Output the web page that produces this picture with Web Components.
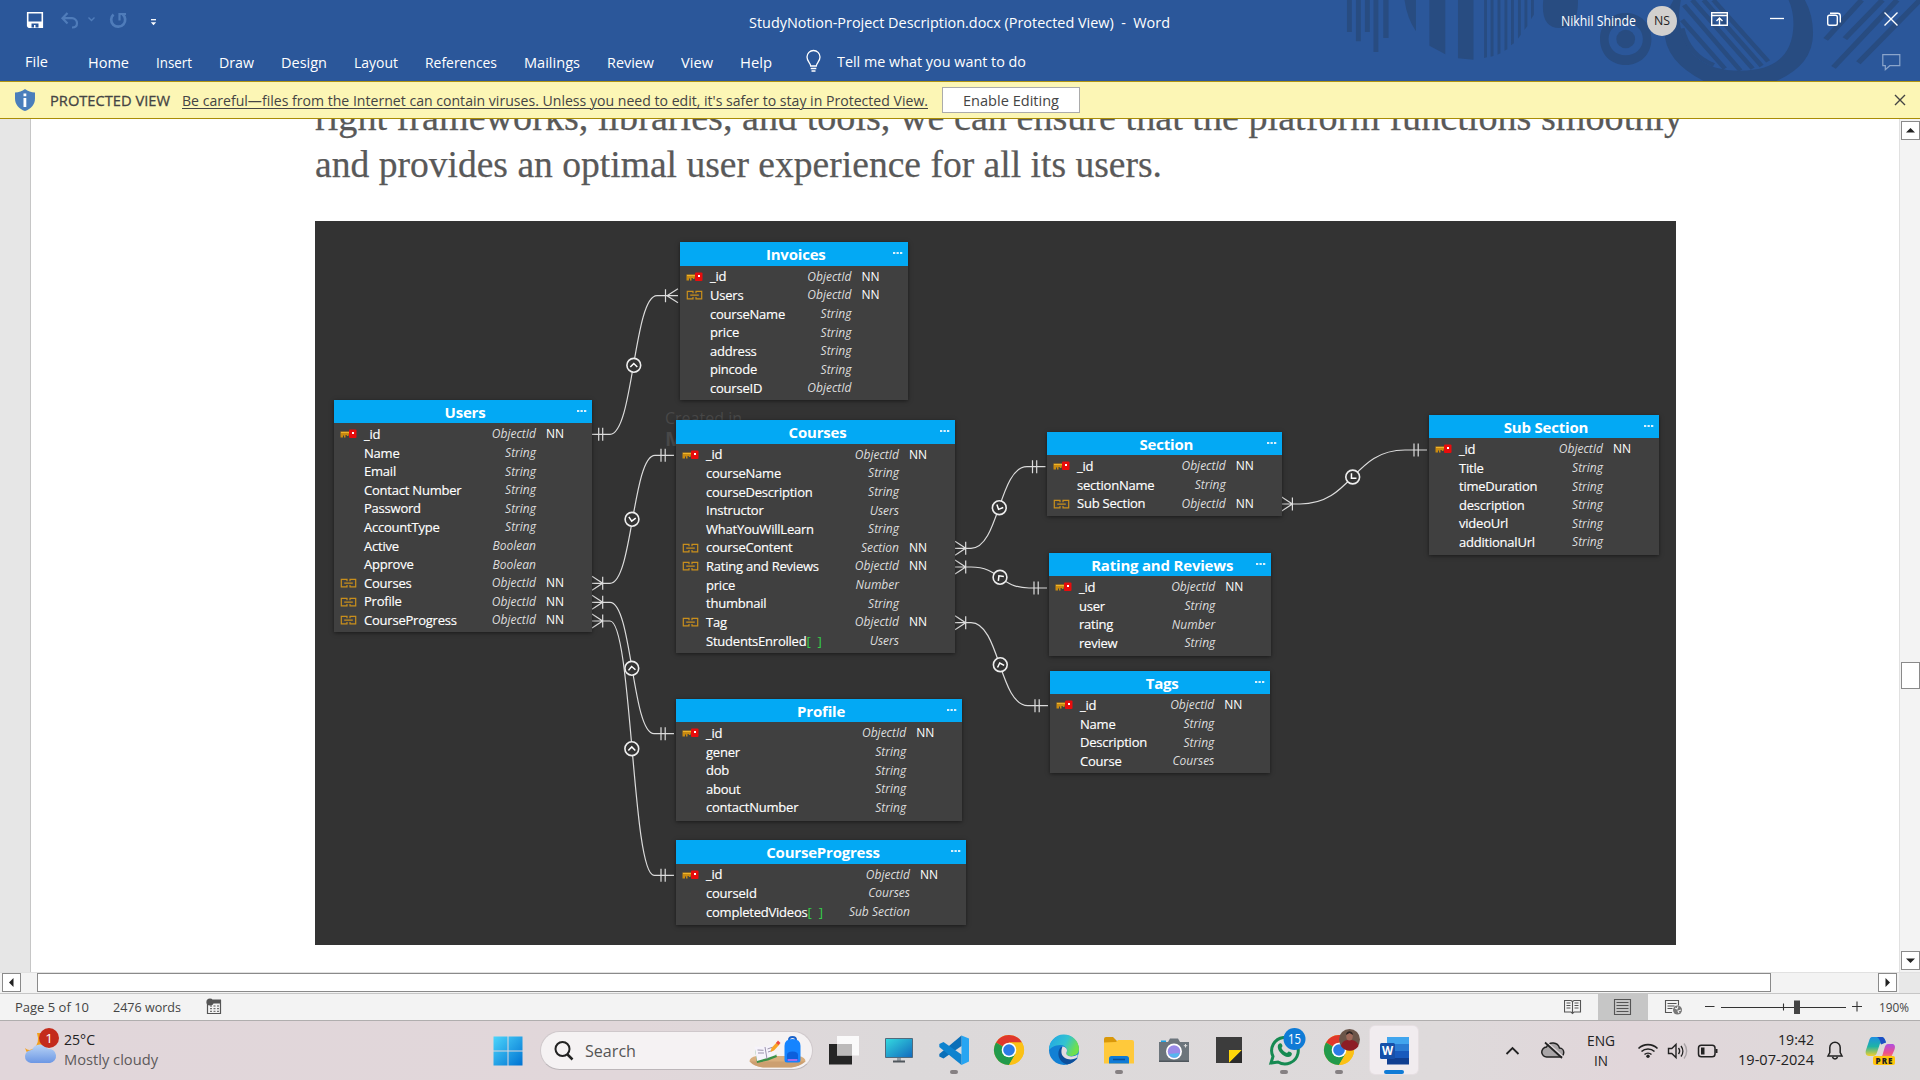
<!DOCTYPE html>
<html lang="en">
<head>
<meta charset="utf-8">
<title>StudyNotion-Project Description.docx - Word</title>
<style>
html,body{margin:0;padding:0;width:1920px;height:1080px;overflow:hidden;background:#fff}
body{font-family:"Open Sans","Noto Sans",sans-serif}
</style>
</head>
<body>
<word-window></word-window>
<script>
const make = (name, html, after) => customElements.define(name, class extends HTMLElement {
  constructor() {
    super();
    const t = document.createElement('template');
    t.innerHTML = html;
    this.attachShadow({mode: 'open'}).append(t.content.cloneNode(true));
  }
  connectedCallback() { if (after) after(this, this.shadowRoot); }
});

/* ---------- title bar ---------- */
make('title-bar', `<style>
:host{display:flex;height:42px;align-items:flex-start;color:#fff;font-size:15px;line-height:20px}
svg{display:block;flex:none}
.quick{display:flex;width:749px;height:42px}
.name{margin-top:12px;width:812px}
.user{margin-top:11px;font-size:14px;width:86px}
.av{width:30px;height:30px;margin-top:6px;border-radius:50%;background:#d2d0ce;color:#222;font-size:12.5px;line-height:30px;display:flex;justify-content:center;flex:none}
</style>
<div class="quick">
<svg width="170" height="42" fill="none">
<path d="M27.7 12.7h14.6v14.6H29.2l-1.5-1.5z" stroke="#fff" stroke-width="1.6"/><path d="M27.7 21.5h14.6v6H27.7z" fill="#fff"/><path d="M31.5 23.5h7v4h-3v-2.500h-1.500v2.500h-2.500z" fill="#2b579a"/>
<g stroke="#4f7cba" stroke-width="2.2"><path d="M67.500 13l-5 5.200 5 5.200M63 18.200h8.500a5 5 0 0 1 5.500 5c0 2.500-1.500 4.300-5 4.300"/><path d="M88.500 17.500l3 3 3-3" stroke-width="1.400"/><path d="M113.500 14.500a7 7 0 1 0 9 -.3" stroke-width="2.700"/><path d="M119.500 20.500v-6.500h6.500" stroke-width="2.200"/></g>
<path d="M151 19.700h5" stroke="#fff" stroke-width="1.300"/><path d="M150.800 22.300h5.400l-2.700 3z" fill="#fff"/>
</svg></div>
<div class="name"><fit-text w="421">StudyNotion-Project Description.docx (Protected View)  -  Word</fit-text></div>
<div class="user"><fit-text w="75">Nikhil Shinde</fit-text></div>
<div class="av"><fit-text w="16">NS</fit-text></div>
<svg width="243" height="42" fill="none" stroke="#fff" stroke-width="1.400"><g transform="translate(-1677 0)">
<path d="M1711.700 12.700h15.600v12.600h-15.600zM1711.700 15.500h15.600M1719.500 24.500v-6M1716.500 21l3-3 3 3"/>
<path d="M1770 18.500h14" stroke-width="1.300"/>
<rect x="1827.700" y="15.200" width="9.600" height="10" rx="1.800"/><path d="M1830 13.200h7.500a2.800 2.800 0 0 1 2.800 2.800v6.500"/>
<path d="M1884.500 12.500l13 13M1897.500 12.500l-13 13"/></g></svg>`);

/* ---------- ribbon tab row ---------- */
make('ribbon-tabs', `<style>
:host{display:flex;height:39px;color:#fff;font-size:15px;line-height:20px;align-items:flex-start}
.f{margin:9px 0 0 25px;width:63px}
nav{display:flex;gap:27px;margin-top:10px;width:718px}
.t{margin:9px 0 0 16px;width:1045px}
svg{display:block;flex:none}
</style>
<div class="f"><fit-text w="23">File</fit-text></div>
<nav><fit-text w="41">Home</fit-text><fit-text w="36">Insert</fit-text><fit-text w="35">Draw</fit-text><fit-text w="46">Design</fit-text><fit-text w="44">Layout</fit-text><fit-text w="72">References</fit-text><fit-text w="56">Mailings</fit-text><fit-text w="47">Review</fit-text><fit-text w="32">View</fit-text><fit-text w="32">Help</fit-text></nav>
<svg width="15" height="39" fill="none" stroke="#fff" stroke-width="1.300"><path d="M4.700 24c0-3-3.700-4.300-3.700-9a6.500 6.500 0 0 1 13 0c0 4.700-3.700 6-3.700 9zM4.700 26.500h5.600M5.500 29h4"/></svg>
<div class="t"><fit-text w="189">Tell me what you want to do</fit-text></div>
<svg width="20" height="39" fill="none" stroke="#8ba5cb" stroke-width="1.200"><path d="M.8 12.700h17v11h-10l-4.500 4v-4H.8z"/></svg>`);

make('app-header', `<style>
:host{display:block;position:relative;height:81px;background:#2b579a}
.art{position:absolute;left:1280px;top:0;z-index:0}
.c{position:relative;z-index:1}
</style>
<svg class="art" width="640" height="81" viewBox="0 0 1568 243" preserveAspectRatio="none">
<g fill="#284c81"><path d="M164 0h12v96h-12zM186 0h12v124h-12zM208 0h12v96h-12zM229 0h12v156h-12zM253 0h13v114h-13zM305 0h28v94q-22-40-28-94zM366 0h39v163l-39-26zM436 0h38v179l-38-4zM500 0h7v172l-7 2zM516 0h7v168l-7 2zM533 0h7v160l-7 4zM550 0h7v148l-7 4zM566 0h7v130l-7 6zM583 0h7v104l-7 12zM599 0h7v78l-7 12zM615 0h7v44l-7 14zM645 0h85q2 84-45 84t-40-84z"/>
<path fill-rule="evenodd" d="M847 39c36 0 63 32 63 78s-27 78-63 78-63-32-63-78 27-78 63-78zm0 30c-24 0-42 20-42 48s18 49 42 49 42-21 42-49-18-48-42-48z"/><ellipse cx="847" cy="117" rx="23" ry="28"/>
<path fill-rule="evenodd" d="M964 0h322q20 45 20 100 0 96-90 143h-178q-96-60-96-150 0-50 22-93zm18 0q-4 30-4 50 10 162 150 162 128 0 130-140 0-40-12-72z"/></g>
<path d="M985 85q16 80 78 110M985 60L1090 206M990 15L1128 212M1010 0L1158 206M1038 0L1180 198M1062 0L1196 184" fill="none" stroke="#284c81" stroke-width="12"/>
<path d="M1337 118L1425 0M1384 116L1476 0M1356 202L1512 0M1417 188L1568 0" stroke="#284c81" stroke-width="14"/>
</svg>
<div class="c"><title-bar></title-bar><ribbon-tabs></ribbon-tabs></div>`);

/* ---------- protected view bar ---------- */
make('protected-bar', `<style>
:host{display:flex;box-sizing:border-box;height:38px;border-top:1px solid #b09512;border-bottom:1px solid #a98d05;background:#fcf6b5;color:#444;font-size:15px;line-height:20px;align-items:flex-start}
svg{display:block;flex:none}
.a{margin-top:8px;width:132px;-webkit-text-stroke:.3px #444}
.b{margin-top:8px;width:760px}
.u{text-decoration:underline;text-underline-offset:2px;text-decoration-thickness:1px}
button{all:unset;box-sizing:border-box;margin-top:5px;width:138px;height:26px;background:#fff;border:1px solid #ababab;display:flex;justify-content:center;line-height:24px}
.x{margin-left:auto;margin-right:13px}
</style>
<svg width="50" height="36"><path d="M15 10.500c4-.3 7-1.300 10-3.500 3 2.200 6 3.200 10 3.500v6c0 6-4 10.500-10 12.500-6-2-10-6.500-10-12.500z" fill="#4a7ebb"/><path d="M23.500 16h2.800v9h-2.800zM23.500 11.500h2.800v2.800h-2.800z" fill="#fff"/></svg>
<div class="a"><fit-text w="120">PROTECTED VIEW</fit-text></div>
<div class="b"><fit-text class="u" w="746">Be careful—files from the Internet can contain viruses. Unless you need to edit, it's safer to stay in Protected View.</fit-text></div>
<button><fit-text w="96">Enable Editing</fit-text></button>
<svg class="x" width="14" height="36" stroke="#444" stroke-width="1.400"><path d="M2 13l10 10M12 13L2 23"/></svg>`);

/* ---------- one entity of the diagram ---------- */
const KEY = '<svg width="17" height="12"><path d="M.5 3.500h9.500v3H8.500V8H6.800V7H5.500v2.500H4v-2H3v2H.5z" fill="#c98a10"/><path d="M1 4.500h9" stroke="#f0b429"/><rect x="9" y="1.500" width="7.500" height="8.500" rx="1" fill="#e80c0c"/><rect x="12" y="4" width="2" height="2" fill="#fff"/></svg>';
const LINK = '<svg width="17" height="12" fill="none" stroke="#c98f1c" stroke-width="1.200"><path d="M7 4.300V2.400H1.300v7.400H7V7.900M10 4.300V2.400h5.700v7.400H10V7.900M4.200 6.100h8.600"/></svg>';
make('er-entity', `<style>
:host{display:block;position:absolute;background:#404040;box-shadow:0 1px 4px rgba(0,0,0,.5);font-family:"Open Sans",sans-serif;color:#fff}
header{height:23.5px;background:#03a9f4;display:flex;align-items:center;justify-content:center;font-weight:700;font-size:15px;letter-spacing:-.2px;line-height:20px;position:relative;box-sizing:border-box;padding:1px 0 0 4px}
header svg{position:absolute;right:5px;top:10px}
.rows{padding-top:2px}
.r{display:flex;height:18.62px;align-items:center;font-size:13px;line-height:18px;white-space:pre}
.i{width:24px;padding-left:6px;height:12px;flex:none}
.i svg{display:block}
.n{flex:1;letter-spacing:-.22px;-webkit-text-stroke:.15px #fff;position:relative;top:-.4px}.n b{font-weight:400;color:#35d04a;word-spacing:4px;-webkit-text-stroke:0}
.t{font-style:italic;font-size:12px;color:#ddd}
.q{width:46px;padding-left:10px;font-size:12px;flex:none}
</style><header><span></span><svg width="10" height="3" fill="#d8f1fd"><path d="M0 0h2.300v2H0zM3.500 0h2.300v2H3.500zM7 0h2.300v2H7z"/></svg></header><div class="rows"></div>`,
(el, sr) => {
  const f = ENTITIES[el.getAttribute('name')];
  const [x, y, r, b] = f.box;
  el.style.cssText = `left:${x - 315}px;top:${y - 221}px;width:${r - x}px;height:${b - y}px`;
  sr.querySelector('span').textContent = el.getAttribute('name');
  sr.querySelector('.rows').innerHTML = f.rows.split(';').map(s => {
    const [k, n, t] = s.split('|');
    return `<div class="r"><span class="i">${k === 'k' ? KEY : k === 'l' ? LINK : ''}</span><span class="n">${n.replace('[ ]', '<b>[ ]</b>')}</span><span class="t">${t}</span><span class="q">${k ? 'NN' : ''}</span></div>`;
  }).join('');
});

const ENTITIES = {
  'Invoices': {box: [680, 242, 907.5, 400], rows: 'k|_id|ObjectId;l|Users|ObjectId;|courseName|String;|price|String;|address|String;|pincode|String;|courseID|ObjectId'},
  'Users': {box: [334, 399.500, 592, 632], rows: 'k|_id|ObjectId;|Name|String;|Email|String;|Contact Number|String;|Password|String;|AccountType|String;|Active|Boolean;|Approve|Boolean;l|Courses|ObjectId;l|Profile|ObjectId;l|CourseProgress|ObjectId'},
  'Courses': {box: [676, 420, 955, 653], rows: 'k|_id|ObjectId;|courseName|String;|courseDescription|String;|Instructor|Users;|WhatYouWillLearn|String;l|courseContent|Section;l|Rating and Reviews|ObjectId;|price|Number;|thumbnail|String;l|Tag|ObjectId;|StudentsEnrolled[ ]|Users'},
  'Section': {box: [1047, 431.500, 1281.700, 515.500], rows: 'k|_id|ObjectId;|sectionName|String;l|Sub Section|ObjectId'},
  'Sub Section': {box: [1429, 414.500, 1659, 554.500], rows: 'k|_id|ObjectId;|Title|String;|timeDuration|String;|description|String;|videoUrl|String;|additionalUrl|String'},
  'Rating and Reviews': {box: [1049, 552.700, 1271.300, 656], rows: 'k|_id|ObjectId;|user|String;|rating|Number;|review|String'},
  'Tags': {box: [1050, 670.500, 1270.300, 773], rows: 'k|_id|ObjectId;|Name|String;|Description|String;|Course|Courses'},
  'Profile': {box: [676, 698.500, 962.200, 820.500], rows: 'k|_id|ObjectId;|gener|String;|dob|String;|about|String;|contactNumber|String'},
  'CourseProgress': {box: [676, 840, 966, 924.500], rows: 'k|_id|ObjectId;|courseId|Courses;|completedVideos[ ]|Sub Section'}
};

/* connector lines: "many" end fork, "one" end double bar, direction marker in the middle */
make('er-links', `<style>:host{display:block;position:absolute;inset:0}svg{display:block}</style><svg width="1361" height="724" viewBox="315 221 1361 724" fill="none" stroke="#dcdcdc" stroke-width="1.200"></svg>`,
(el, sr) => {
  const L = [
    {m: [592, 583.300], o: [674, 455.300], c: [610, 655], k: [632, 519.300], a: 10},
    {m: [592, 602.300], o: [674, 733.700], c: [610, 654], k: [631.800, 668.300], a: 175},
    {m: [592, 621], o: [674, 875.300], c: [610, 654], k: [631.800, 748.700], a: 180},
    {m: [955, 548.300], o: [1045.500, 466.700], c: [971, 1027], k: [999.300, 507.700], a: 25},
    {m: [955, 567], o: [1047, 588], c: [971, 1029], k: [1000, 577.300], a: 142},
    {m: [955, 622.700], o: [1048, 705.700], c: [971, 1028], k: [1000.300, 664.700], a: 162},
    {m: [1281.700, 504], o: [1427, 450], c: [1300, 1405], k: [1352.700, 477], a: 45}
  ];
  const dot = ([x, y], a) => `<circle cx="${x}" cy="${y}" r="6.900" fill="#333" stroke="#eee" stroke-width="1.600"/><path transform="translate(${x} ${y}) rotate(${a})" d="M-3.500-1.800L0 1.800 3.500-1.800" stroke="#fff" stroke-width="1.500"/>`;
  let s = '';
  for (const {m: [x, y], o: [p, q], c: [u, v], k, a} of L) {
    const h = (u + v) / 2;
    s += `<path d="M${x} ${y}H${u}C${h} ${y} ${h} ${q} ${v} ${q}H${p}M${x} ${y - 7}L${x + 10.700} ${y}L${x} ${y + 7}M${x + 10.700} ${y - 6.500}v13M${p - 13} ${q - 6.500}v13M${p - 8.800} ${q - 6.500}v13"/>` + dot(k, a);
  }
  s += `<path d="M592 434.300H610C633.500 434.300 633.500 295.700 657 295.700H678M678 288.700L667 295.700L678 302.700M665.500 289.200v13M598.700 427.800v13M602.700 427.800v13"/>` + dot([633.800, 365.300], 180);
  sr.querySelector('svg').innerHTML = s;
});

make('er-diagram', `<style>
:host{display:block;position:relative;width:1361px;height:724px;background:#333;overflow:hidden}
.w{position:absolute;left:350px;top:186px;font-size:16px;line-height:22px;color:#484848}
.w b{display:block;font-size:20px;line-height:20px}
</style><div class="w">Created in<b>M</b></div><er-links></er-links>` + Object.keys(ENTITIES).map(n => `<er-entity name="${n}"></er-entity>`).join(''));

/* ---------- document area ---------- */
make('scroll-button', `<style>:host{display:block;box-sizing:border-box;background:#fff;border:1px solid #8a8a8a;width:19px;height:19px;flex:none}svg{display:block;margin:auto}</style><svg width="17" height="17"><path d="M4 10.500h9L8.500 6z" fill="#222"/></svg>`,
(el, sr) => { sr.querySelector('path').setAttribute('transform', `rotate(${el.getAttribute('turn')} 8.5 8.5)`); });

make('document-view', `<style>
:host{display:flex;height:853px;background:#fff}
.gut{width:30px;background:#e6e6e6;border-right:1px solid #c6c6c6;flex:none}
main{width:1868px;overflow:hidden;padding-left:284px;box-sizing:border-box}
.p{font:38px/47px "Liberation Serif",serif;color:#595959;margin-top:-25px;height:127px;display:flex;flex-direction:column;-webkit-text-stroke:.25px #595959}
.v{background:#f3f3f3;border-left:1px solid #e1e1e1;display:flex;flex-direction:column;align-items:flex-start;padding:2px 0 0 1px;box-sizing:border-box;height:853px;width:21px}
.v i{display:block;box-sizing:border-box;height:27px;width:19px;margin-top:522px;background:#fff;border:1px solid #8a8a8a}
.v scroll-button:last-child{margin-top:auto;margin-bottom:2px}
</style>
<div class="gut"></div>
<main><div class="p"><fit-text w="1368">right frameworks, libraries, and tools, we can ensure that the platform functions smoothly</fit-text><fit-text w="847">and provides an optimal user experience for all its users.</fit-text></div>
<er-diagram></er-diagram></main>
<div class="v"><scroll-button turn="0"></scroll-button><i></i><scroll-button turn="180"></scroll-button></div>`);

make('horizontal-scroll', `<style>
:host{display:flex;box-sizing:border-box;height:22px;background:#f3f3f3;border-top:1px solid #e1e1e1;border-bottom:1px solid #c6c6c6;padding-left:2px}
i{display:block;box-sizing:border-box;margin-left:16px;width:1734px;height:19px;background:#fff;border:1px solid #8a8a8a}
.e{margin-left:auto;margin-right:2px}.c{width:21px;background:#e8e8e8}
</style><scroll-button turn="270"></scroll-button><i></i><scroll-button class="e" turn="90"></scroll-button><span class="c"></span>`);

make('status-bar', `<style>
:host{display:flex;box-sizing:border-box;height:27px;background:#f3f3f3;border-bottom:1px solid #b0aeae;color:#444;font-size:13px;line-height:26px;padding-left:15px}
svg{display:block;flex:none}.a{width:98px}.b{width:93px}.s{margin-left:auto}
.z{width:41px}
</style>
<div class="a"><fit-text w="74">Page 5 of 10</fit-text></div><div class="b"><fit-text w="68">2476 words</fit-text></div>
<svg width="16" height="26"><path d="M1.500 8v11.500h13V6" fill="none" stroke="#555" stroke-width="1.200"/><path d="M7 5.500h8v4H7z" fill="#555"/><circle cx="4" cy="8" r="3.600" fill="#555"/><path d="M4 12h9M4 14.700h9M4 17.300h9" stroke="#555" stroke-dasharray="2 1.500"/></svg>
<svg class="s" width="315" height="26" fill="none" stroke="#555" stroke-width="1.100"><g transform="translate(-1564 0)">
<path d="M1564.500 6.500h6.500l1.500 1 1.500-1h6.500v11.500h-6.500l-1.500 1.500-1.500-1.500h-6.500zM1572.500 7v12M1566.500 9h4M1566.500 11.500h4M1566.500 14h4M1574.500 9h4M1574.500 11.500h4M1574.500 14h4"/>
<path d="M1598 0h50v26h-50z" fill="#c6c6c6" stroke="none"/><path d="M1614.500 5.500h16v15h-16zM1616.500 8.500h12M1616.500 11.500h12M1616.500 14.500h12M1616.500 17.500h12"/>
<path d="M1672 18.500h-6.500V6.500h13v5M1667.500 9.500h9M1667.500 12h7M1667.500 14.500h5"/><circle cx="1677.500" cy="16" r="4.500" fill="#777" stroke="none"/><path d="M1675 14l2 1 1-2.500M1679 19l-1-2 3-1" stroke="#f3f3f3"/>
<path d="M1705 12.500h9.500M1721 13.500h125M1783.500 9.500v7M1852 12.500h10M1857 7.500v10" stroke="#333"/><path d="M1794 6.500h6v13.500h-6z" fill="#444" stroke="none"/></g></svg>
<div class="z"><fit-text w="30">190%</fit-text></div>`);

/* ---------- taskbar ---------- */
const CHROME = '<circle cx="24" cy="24" r="15" fill="#fbbf17"/><path d="M24 24L11 16.500A15 15 0 0 1 37 16.500H24z" fill="#e0372c"/><path d="M11 16.500A15 15 0 0 0 24 39l6.500-11.300L24 24z" fill="#229a4b"/><path d="M24 39a15 15 0 0 0 13-22.500H24L30.500 28z" fill="#fbc116"/><circle cx="24" cy="24" r="7.300" fill="#fff"/><circle cx="24" cy="24" r="5.800" fill="#2c7be5"/>';
const ICONS = {
  start: '<defs><linearGradient id="g" x1="0" y1="0" x2="1" y2="1"><stop stop-color="#4cd5fb"/><stop offset="1" stop-color="#0072d2"/></linearGradient></defs><path d="M9.500 10.500h14v14h-14zM24.500 10.500h14v14h-14zM9.500 25.500h14v14h-14zM24.500 25.500h14v14h-14z" fill="url(#g)"/>',
  view: '<path d="M9 18h23v20.500H9z" fill="#252525"/><path d="M17 10h22v19.500H17z" fill="#fff" opacity=".85"/><path d="M17 18h15v11.500H17z" fill="#bcbaba"/>',
  monitor: '<defs><linearGradient id="g" x1="0" y1="0" x2="1" y2="1"><stop stop-color="#34dbe0"/><stop offset="1" stop-color="#1268bd"/></linearGradient></defs><path d="M22 32h4v4h-4z" fill="#9aa0a6"/><path d="M10.500 12.500h27v19h-27z" fill="url(#g)" stroke="#526a7c"/><path d="M18 34.500h12v2H18z" fill="#50565c"/>',
  code: '<path d="M31.500 9.500L39 12.500v23l-7.500 3.500z" fill="#27a5f2"/><path d="M31.500 9.500v10.500L13.500 32.500 9.300 30.500V28z" fill="#0a6fb8"/><path d="M31.500 39V28.500L13.500 16l-4.200 2v3z" fill="#0e83cf"/>',
  chrome: CHROME,
  edge: '<defs><linearGradient id="g" x1="0" y1="0" x2="1" y2=".4"><stop stop-color="#1fa3e8"/><stop offset=".6" stop-color="#33c3d0"/><stop offset="1" stop-color="#6fe04c"/></linearGradient></defs><circle cx="24" cy="24" r="15" fill="#1280d4"/><path d="M9 24a15 15 0 0 1 30-1c0 5-4 7-8 7-4 0-6-1.500-4.500-3 2-3-1-8-6-8-6 0-10 3-11.500 5z" fill="url(#g)"/><path d="M21 21c-5 5-3 15 6 17.500 5-1 9-4 11-7-6 3-14 1-14-5 0-3 1.500-5 1.500-5z" fill="#0d4f9b"/><path d="M22.500 20.500c2 0 4 1.500 4.500 3.500.3 2-1.500 3-.5 4.500 2 2.500 7 2.500 11.500 0l-1.500 3.500c-6 3-14 1-15-5-.4-3 .5-5 1-6.500z" fill="#e4dcdf"/>',
  folder: '<path d="M9 13a2 2 0 0 1 2-2h7l4 4h10v6H9z" fill="#d9980a"/><path d="M9 16.500l12-.5 2-2h14a2 2 0 0 1 2 2v21.500H9z" fill="#ffc93b"/><path d="M14 37.500v-5a2.500 2.500 0 0 1 2.500-2.500h15a2.500 2.500 0 0 1 2.500 2.500v5z" fill="#0f7bd6"/><path d="M18 33.500h12" stroke="#0b4f94" stroke-width="1.500"/>',
  camera: '<path d="M11 14.500h5v2h-5z" fill="#1ba1e2"/><path d="M9 16h9l2-3.500h8l2 3.500h9v20H9z" fill="#6c757c"/><path d="M9 34.500h30V36H9z" fill="#4e565c"/><circle cx="24" cy="25.500" r="8" fill="#fff"/><circle cx="24" cy="25.500" r="6.300" fill="#9a8ae8"/><path d="M18.500 28a6.300 6.300 0 0 0 10 2l1-3z" fill="#56b6ee"/><path d="M35.500 18v3.500M33.800 19.700h3.500" stroke="#ddd"/>',
  notes: '<path d="M11 11h26v26H11z" fill="#3c3c3c"/><path d="M24 24h13L24 37z" fill="#ffd70a"/><path d="M37 24v13H24z" fill="#2b2b2b"/>',
  whatsapp: '<path d="M11 37l2-6.500A13.300 13.300 0 1 1 18 36z" fill="none" stroke="#168a52" stroke-width="3"/><path d="M18 19c2-3 4-2 4.500 1l-1 2c1.500 3 3 4 5.500 5l1.500-1.500c3 .5 4.500 2 2.500 4.500-5 4-15-5-13-11z" fill="#168a52"/><circle cx="34.500" cy="13" r="11" fill="#0f7bd6"/><text x="34.500" y="18" text-anchor="middle" fill="#fff" font-size="14" textLength="13" lengthAdjust="spacingAndGlyphs">15</text>',
  chromeUser: CHROME + '<circle cx="34.500" cy="13.500" r="10.500" fill="#6b5549"/><path d="M26 20c1-5 4-6 8.500-6s8 1 9 6a10.500 10.500 0 0 1-17.500 0z" fill="#8d1d26"/><ellipse cx="34.500" cy="10" rx="3.300" ry="4.500" fill="#a0695a"/><path d="M31 9c0-5 7-5 7 0l-3.500-2z" fill="#2b2322"/>',
  word: '<path d="M17 11h22v7H17z" fill="#41a5ee"/><path d="M17 18h22v7H17z" fill="#2b7cd3"/><path d="M17 25h22v7H17z" fill="#185abd"/><path d="M17 32h22v6.500H17z" fill="#103f91"/><rect x="10" y="17" width="15" height="16" rx="1.500" fill="#1650a9"/><text x="17.500" y="29" text-anchor="middle" fill="#fff" font-size="11.500" font-weight="700">W</text>'
};
make('task-icon', `<style>:host{display:block;width:48px;height:48px;border-radius:5px;box-sizing:border-box;flex:none;position:relative}
:host([on]){background:#f1ecef;box-shadow:0 0 0 1px #e6dfe2}
svg{display:block;overflow:visible}
i{display:block;position:absolute;bottom:0;left:20px;width:8px;height:4px;border-radius:2px;background:#858082}
:host([on]) i{left:14px;width:20px;background:#0f7bd6}:host(:not([run]):not([on])) i{display:none}</style><svg width="48" height="48"></svg><i></i>`,
(el, sr) => { sr.querySelector('svg').innerHTML = ICONS[el.getAttribute('icon')]; });

make('search-box', `<style>:host{display:flex;box-sizing:border-box;width:273px;height:39px;border-radius:20px;background:#f5f2f3;border:1px solid #cfc8cb;border-bottom-color:#bcb6b9;font-size:16px;line-height:38px;color:#555;flex:none}
svg{display:block;flex:none}.t{width:163px}</style>
<svg width="44" height="37" fill="none" stroke="#222" stroke-width="2"><circle cx="21.500" cy="17" r="7"/><path d="M26.500 22.500l5 5" stroke-width="2.500"/></svg><div class="t"><fit-text w="51">Search</fit-text></div>
<svg width="60" height="37"><path d="M1.500 29.500q0-4.500 7-5.500h42q7 1 7 5.500-6 5-14 6H15q-9-1-13.500-6z" fill="#d9ae7d"/><path d="M2 29.500h55.500q-6 5-14 6H15q-9-1-13-6z" fill="#b98a5c" opacity=".4"/><path d="M7 16l2 15 11-2.500 9-3.500-1-3-10 2z" fill="#3b9148"/><path d="M6.500 14.500l10.500.5 8-3 3 11-8.500 3-10.500 3z" fill="#f6f3fb"/><path d="M17 15l2 12M9.500 18l6 .3M10 21l6 0M19.500 17l5-1.800M20 20l5-1.800" stroke="#9b93ad" fill="none"/><path d="M22.500 20l1-4 5.500-6 2.500 2.500-5.500 6z" fill="#f8a327"/><path d="M28 11l2-2.500 2.500 2.500-2 2z" fill="#f04b3f"/><path d="M41 8q0-3 3.500-3t3.500 3" fill="none" stroke="#1b62c9" stroke-width="2"/><path d="M36.500 14q0-7 8-7t8 7v14q0 2.500-2.500 2.500H39q-2.500 0-2.500-2.500z" fill="#1584ff"/><path d="M39 23q0-3.500 5.500-3.500T50 23v6H39z" fill="#0c5fdc"/><path d="M39.500 28h10" stroke="#9b6cf0" stroke-width="2"/></svg>`);

make('weather-widget', `<style>:host{display:flex;width:489px;box-sizing:border-box;flex:none}
svg{display:block;flex:none}.t{display:flex;flex-direction:column;padding-top:8px;font-size:15px;line-height:20px;color:#222}.t fit-text+fit-text{color:#5d5a5b}</style>
<svg width="64" height="59"><defs><linearGradient id="c" x1="0" y1="0" x2="0" y2="1"><stop stop-color="#b9d4f6"/><stop offset="1" stop-color="#6c97e4"/></linearGradient></defs><path d="M37 12q3 10-3 15-5 4-9 0 2 6 6 9l16-6V12z" fill="#f2a01f"/><path d="M31 42a6.500 6.500 0 0 1 1-13 9 9 0 0 1 16-1 7 7 0 0 1 2 14z" fill="url(#c)"/><circle cx="49" cy="17" r="10" fill="#c42b1c"/><text x="49" y="22" fill="#fff" font-size="13.500" text-anchor="middle">1</text></svg>
<div class="t"><fit-text w="31">25°C</fit-text><fit-text w="94">Mostly cloudy</fit-text></div>`);

make('system-tray', `<style>:host{display:flex;margin-left:auto;color:#222;font-size:15px;line-height:20px;flex:none}
svg{display:block;flex:none}.l{display:flex;flex-direction:column;align-items:center;width:28px;padding-top:9px}.d{display:flex;flex-direction:column;align-items:flex-end;width:75px;padding:8px 1px 0 0}</style>
<svg width="87" height="59" fill="none" stroke="#222"><path d="M6.500 33l6-6 6 6" stroke-width="1.800"/><path d="M47 36h12a4.500 4.500 0 0 0 .5-9 7 7 0 0 0-13-1 5 5 0 0 0 .5 10z" fill="#a9a5a7" stroke-width="1.500"/><path d="M46 20.500l17 15" stroke="#e2dadd" stroke-width="1.600"/><path d="M45 21.500l17 15.500" stroke-width="1.700"/></svg>
<div class="l"><fit-text w="28">ENG</fit-text><fit-text w="14">IN</fit-text></div>
<svg width="124" height="59" fill="none" stroke="#222" stroke-width="1.600"><path d="M23.500 27.500a13.500 13.500 0 0 1 19 0M26.500 30.500a9.500 9.500 0 0 1 13 0M29.500 33.500a5.300 5.300 0 0 1 7 0"/><circle cx="33" cy="35.300" r="1.700" fill="#222" stroke="none"/><path d="M53.500 27.500h3.300l4.200-4v13l-4.200-4h-3.300z" stroke-width="1.400"/><path d="M63.500 27a5 5 0 0 1 0 6M66 25a8.500 8.500 0 0 1 0 10.500" stroke-width="1.400"/><path d="M69 22.500a12 12 0 0 1 0 15" stroke="#aaa4a7" stroke-width="1.400"/><rect x="83.500" y="24.200" width="16.500" height="11.500" rx="2.800" stroke-width="1.500"/><path d="M86 26.500h3.500v7H86z" fill="#222" stroke="none"/><path d="M101.500 28v4" stroke-width="2"/></svg>
<div class="d"><fit-text w="36">19:42</fit-text><fit-text w="76">19-07-2024</fit-text></div>
<svg width="105" height="59"><path d="M13 35h14l-1.800-3.500v-5a5.200 5.200 0 0 0-10.400 0v5zM17.500 36a2.600 2.600 0 0 0 5 0" fill="none" stroke="#222" stroke-width="1.500"/>
<defs><linearGradient id="a" x1="0" y1="0" x2="0" y2="1"><stop stop-color="#1d8fe0"/><stop offset=".5" stop-color="#1fb3a6"/><stop offset="1" stop-color="#f4d02a"/></linearGradient><linearGradient id="b" x1="0" y1="0" x2="0" y2="1"><stop stop-color="#b04fe0"/><stop offset=".6" stop-color="#ee4f8a"/><stop offset="1" stop-color="#fb9c3c"/></linearGradient></defs>
<path d="M57 16h9c3 0 4 2 5 5.500l-6 1-3 9q-1 3.500-4 3.500h-4c-3 0-4-3-3-6l3-9q1-4 3-4z" fill="url(#a)"/><path d="M62 16h4c3 0 4 2 5 5.500l-5 2q-1-6-4-7.500z" fill="#1c4fc4"/><path d="M73 23h4c3 0 3.500 2.500 2.500 5.500l-3 7q-1 2.500-4 2.500h-8q2-1 3-4l2-7q1-4 3.500-4z" fill="url(#b)"/><rect x="58" y="35" width="22" height="9" rx="2" fill="#ffc60b"/><text x="60.500" y="42.700" font-size="8" font-weight="800" fill="#222" textLength="17">PRE</text></svg>`);

make('task-bar', `<style>:host{display:flex;height:59px;background:linear-gradient(90deg,#e1d6da,#e1d7da 33%,#dcd9da 47%,#dedadb 75%,#e1d6da 85%,#dddada)}
.c{display:flex;padding-top:5px;height:54px;flex:none}
.c search-box{margin:5px 4px 0 8px}
.apps{display:flex;gap:7px;margin-left:3px}
.start{margin-left:-5px}
</style>
<weather-widget></weather-widget>
<div class="c"><task-icon class="start" icon="start"></task-icon><search-box></search-box>
<div class="apps"><task-icon icon="view"></task-icon><task-icon icon="monitor"></task-icon><task-icon icon="code" run></task-icon><task-icon icon="chrome"></task-icon><task-icon icon="edge"></task-icon><task-icon icon="folder" run></task-icon><task-icon icon="camera"></task-icon><task-icon icon="notes"></task-icon><task-icon icon="whatsapp" run></task-icon><task-icon icon="chromeUser" run></task-icon><task-icon icon="word" on></task-icon></div></div>
<system-tray></system-tray>`);

make('word-window', `<style>:host{display:flex;flex-direction:column;width:1920px;height:1080px}:host>*{flex:none}</style>
<app-header></app-header><protected-bar></protected-bar><document-view></document-view><horizontal-scroll></horizontal-scroll><status-bar></status-bar><task-bar></task-bar>`);

/* text scaled horizontally to a given width */
make('fit-text', `<style>:host{display:block;white-space:pre;flex:none}span{display:inline-block;transform-origin:0 50%;white-space:pre;text-decoration:inherit}</style><span><slot></slot></span>`,
(el, sr) => {
  const w = +el.getAttribute('w'), s = sr.querySelector('span');
  el.style.width = w + 'px';
  const n = s.getBoundingClientRect().width;
  if (n) s.style.transform = `scaleX(${w / n})`;
});
</script>
</body>
</html>
